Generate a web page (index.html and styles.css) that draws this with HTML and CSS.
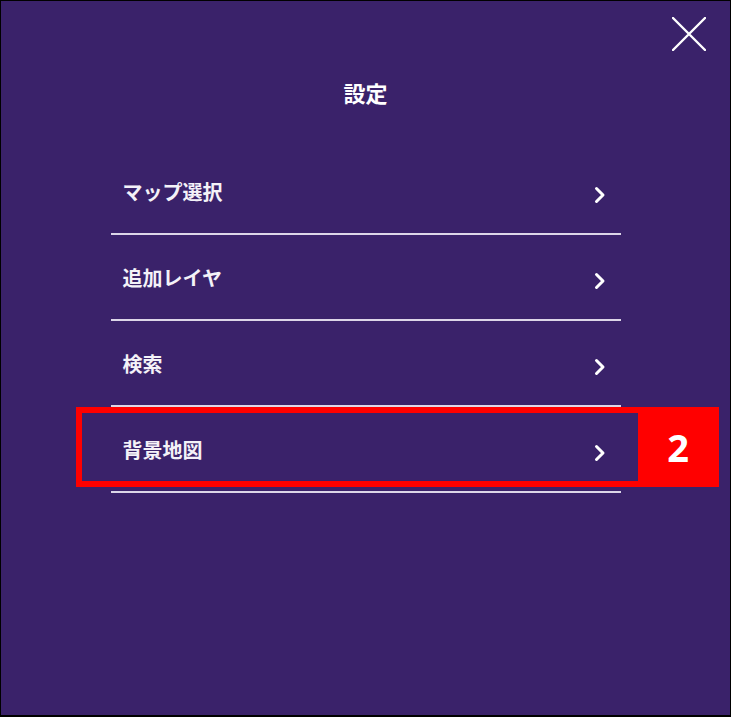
FILE: index.html
```html
<!DOCTYPE html>
<html lang="ja">
<head>
  <meta charset="UTF-8">
  <meta name="viewport" content="width=device-width, initial-scale=1.0">

  <title>設定</title>

  <link rel="stylesheet" href="styles.css">
</head>
<body>

  <div id="Configuracao" class="Configuracao">
    <div class="ConfiguracaoTopo">
      <button type="button" class="ConfiguracaoFechar" aria-label="閉じる">
        <svg width="34" height="34" viewBox="0 0 34 34">
          <path d="M1 1 L33 33 M33 1 L1 33" stroke="#fff" stroke-width="2.4" stroke-linecap="round" fill="none"/>
        </svg>
      </button>
    </div>

    <h1 class="ConfiguracaoTitulo">設定</h1>

    <ul id="ConfiguracaoMenu" class="ConfiguracaoMenu">
      <li class="ConfiguracaoItem">
        <span class="ConfiguracaoItemTexto">マップ選択</span>
        <svg class="ConfiguracaoSeta" width="12" height="18" viewBox="0 0 12 18"><path d="M2.5 2.5 L9 9 L2.5 15.5" stroke="#fff" stroke-width="3" stroke-linecap="round" stroke-linejoin="round" fill="none"/></svg>
      </li>
      <li class="ConfiguracaoItem">
        <span class="ConfiguracaoItemTexto">追加レイヤ</span>
        <svg class="ConfiguracaoSeta" width="12" height="18" viewBox="0 0 12 18"><path d="M2.5 2.5 L9 9 L2.5 15.5" stroke="#fff" stroke-width="3" stroke-linecap="round" stroke-linejoin="round" fill="none"/></svg>
      </li>
      <li class="ConfiguracaoItem">
        <span class="ConfiguracaoItemTexto">検索</span>
        <svg class="ConfiguracaoSeta" width="12" height="18" viewBox="0 0 12 18"><path d="M2.5 2.5 L9 9 L2.5 15.5" stroke="#fff" stroke-width="3" stroke-linecap="round" stroke-linejoin="round" fill="none"/></svg>
      </li>
      <li class="ConfiguracaoItem">
        <span class="ConfiguracaoItemTexto">背景地図</span>
        <svg class="ConfiguracaoSeta" width="12" height="18" viewBox="0 0 12 18"><path d="M2.5 2.5 L9 9 L2.5 15.5" stroke="#fff" stroke-width="3" stroke-linecap="round" stroke-linejoin="round" fill="none"/></svg>

        <!-- Destaque do passo 2 -->
        <div class="Destaque">
          <div class="DestaqueMoldura"></div>
          <div class="DestaqueNumero">2</div>
        </div>
      </li>
    </ul>
  </div>

</body>
</html>
```

FILE: styles.css
```css
html, body {
  margin: 0;
  padding: 0;
}
body {
  font-family: "Noto Sans CJK JP", "Noto Sans", sans-serif;
  background-color: #000;
}
.Configuracao {
  box-sizing: border-box;
  width: 731px;
  height: 717px;
  border: 1px solid #000;
  border-bottom-width: 2px;
  background-color: #3a226a;
  color: #fff;
}
.ConfiguracaoTopo {
  display: flex;
  justify-content: flex-end;
  padding: 16px 24px 0 0;
}
.ConfiguracaoFechar {
  display: block;
  width: 34px;
  height: 34px;
  padding: 0;
  border: 0;
  background: none;
  cursor: pointer;
}
.ConfiguracaoFechar svg {
  display: block;
}
.ConfiguracaoTitulo {
  margin: 26px 0 0 0;
  font-size: 22px;
  line-height: 30px;
  font-weight: 700;
  text-align: center;
}
.ConfiguracaoMenu {
  list-style: none;
  width: 510px;
  margin: 42px auto 0 auto;
  padding: 0;
}
.ConfiguracaoItem {
  position: relative;
  display: flex;
  align-items: center;
  justify-content: space-between;
  height: 84px;
  padding: 0 15px 0 12px;
  border-bottom: 2px solid #dcd6e8;
}
.ConfiguracaoItemTexto {
  padding-top: 2px;
  font-size: 20px;
  font-weight: 700;
  line-height: 28px;
  color: #f4f2f8;
}
.ConfiguracaoSeta {
  display: block;
  margin-top: 8px;
}

/* destaque vermelho por cima do item */
.Destaque {
  position: absolute;
  top: 0;
  left: -35px;
  display: flex;
  height: 80px;
}
.DestaqueMoldura {
  box-sizing: border-box;
  width: 562px;
  height: 80px;
  border: 6px solid #ff0000;
  border-right-width: 0;
}
.DestaqueNumero {
  width: 81px;
  height: 80px;
  background-color: #ff0000;
  color: #fff;
  font-family: "Noto Sans", sans-serif;
  font-size: 38px;
  font-weight: 700;
  line-height: 80px;
  text-align: center;
}
```
